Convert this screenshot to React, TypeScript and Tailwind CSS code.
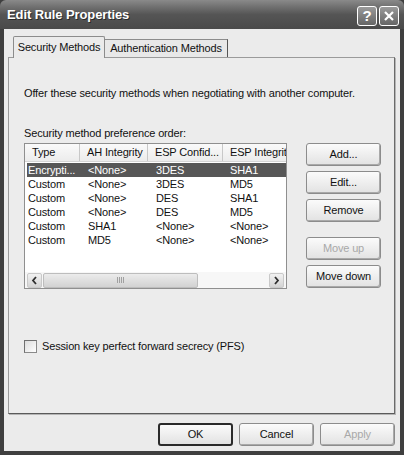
import React from "react";

const rows = [
  ["Encrypti...", "<None>", "3DES", "SHA1"],
  ["Custom", "<None>", "3DES", "MD5"],
  ["Custom", "<None>", "DES", "SHA1"],
  ["Custom", "<None>", "DES", "MD5"],
  ["Custom", "SHA1", "<None>", "<None>"],
  ["Custom", "MD5", "<None>", "<None>"],
];

function Btn({ label, disabled, isDefault, className = "" }: { label: string; disabled?: boolean; isDefault?: boolean; className?: string }) {
  return (
    <div
      className={
        "w-[75px] h-[23px] flex items-center justify-center rounded-[3px] bg-gradient-to-b from-[#fbfbfb] to-[#e2e2e2] " +
        (isDefault
          ? "border-2 border-[#2a2a2a] "
          : "border border-[#8c8c8c] shadow-[inset_-1px_-1px_0_#a9a9a9] ") +
        (disabled ? "text-[#a8a8a8] " : "text-[#111] ") +
        className
      }
    >
      {label}
    </div>
  );
}

function Arrow({ dir }: { dir: "l" | "r" }) {
  return (
    <div className="w-[15px] h-[15px] rounded-[2px] border border-[#c9c9c9] bg-gradient-to-b from-[#f2f2f2] to-[#d4d4d4] flex items-center justify-center">
      <svg width="7" height="9" viewBox="0 0 7 9">
        <polyline
          points={dir === "l" ? "5,1 2,4.5 5,8" : "2,1 5,4.5 2,8"}
          fill="none"
          stroke="#2f2f2f"
          strokeWidth="1.8"
        />
      </svg>
    </div>
  );
}

export default function App() {
  return (
    <div className="w-[404px] h-[455px] bg-[#3f3f3f] flex flex-col font-['Liberation_Sans',Arial,sans-serif] text-[#111] overflow-hidden">
      {/* title bar */}
      <div className="h-[29px] rounded-t-[6px] bg-gradient-to-b from-[#8a8a8a] via-[#555] to-[#4a4a4a] flex items-center justify-between pl-[7px] pr-[5px]">
        <span className="text-white font-bold text-[13px] tracking-[-0.1px] [text-shadow:1px_1px_0_#2a2a2a]">Edit Rule Properties</span>
        <div className="flex gap-[2px] pt-[2px]">
          <div className="w-[20px] h-[20px] rounded-[3px] border border-white bg-gradient-to-b from-[#9a9a9a] to-[#666] flex items-center justify-center text-white font-bold text-[15px] leading-none">
            ?
          </div>
          <div className="w-[20px] h-[20px] rounded-[3px] border border-white bg-gradient-to-b from-[#9a9a9a] to-[#666] flex items-center justify-center">
            <svg width="12" height="12" viewBox="0 0 12 12">
              <path d="M2 2 L10 10 M10 2 L2 10" stroke="white" strokeWidth="2.2" />
            </svg>
          </div>
        </div>
      </div>

      {/* body */}
      <div className="flex-1 mx-[4px] mb-[4px] bg-[#ebebeb] pl-[4px] pr-[5px] pt-[7px] flex flex-col text-[11px] tracking-[-0.15px]">
        {/* tabs */}
        <div className="h-[21px] flex items-end pl-[5px]">
          <div className="relative z-10 -mb-px w-[92px] h-[22px] border border-b-0 border-[#8c8c8c] bg-[#ebebeb] rounded-t-[2px] flex items-center justify-center pb-[1px]">
            Security Methods
          </div>
          <div className="w-[123px] h-[18px] border border-l-0 border-b-0 border-[#8c8c8c] border-r-[#555] bg-[#e8e8e8] flex items-center justify-center">
            Authentication Methods
          </div>
        </div>

        {/* panel */}
        <div className="h-[357px] border border-[#9a9a9a] border-r-[#6a6a6a] border-b-[#5a5a5a] shadow-[1px_1px_0_#b5b5b5] bg-[#ececec] pl-[15px] pt-[29px] flex flex-col">
          <div className="h-[13px] leading-[13px]">Offer these security methods when negotiating with another computer.</div>
          <div className="h-[13px] leading-[13px] mt-[27px]">Security method preference order:</div>

          <div className="flex mt-[3px]">
            {/* list view */}
            <div className="w-[263px] h-[146px] border border-[#8f8f8f] bg-white flex flex-col overflow-hidden">
              <div className="h-[18px] flex bg-gradient-to-b from-[#fafafa] to-[#ececec] border-b border-[#d5d5d5] shrink-0">
                {[
                  ["Type", "w-[55px]"],
                  ["AH Integrity", "w-[68px]"],
                  ["ESP Confid...", "w-[75px]"],
                  ["ESP Integrit", "w-[80px]"],
                ].map(([t, w]) => (
                  <div key={t} className={w + " shrink-0 pl-[7px] flex items-center border-r border-[#c8c8c8] whitespace-nowrap"}>
                    {t}
                  </div>
                ))}
              </div>
              <div className="flex-1 pt-[1px] pl-[2px]">
                {rows.map((r, i) => (
                  <div
                    key={i}
                    className={
                      "h-[14px] flex items-center whitespace-nowrap " +
                      (i === 0 ? "bg-[#575757] text-white" : "")
                    }
                  >
                    <div className="w-[53px] shrink-0 pl-[1px]">{r[0]}</div>
                    <div className="w-[68px] shrink-0 pl-[8px]">{r[1]}</div>
                    <div className="w-[75px] shrink-0 pl-[8px]">{r[2]}</div>
                    <div className="w-[63px] shrink-0 pl-[7px]">{r[3]}</div>
                  </div>
                ))}
              </div>
              {/* horizontal scrollbar */}
              <div className="h-[16px] shrink-0 flex items-center px-[2px] bg-[#f7f7f7]">
                <Arrow dir="l" />
                <div className="w-[155px] h-[15px] ml-[1px] rounded-[2px] border border-[#bdbdbd] bg-gradient-to-b from-[#ececec] to-[#d2d2d2] flex items-center justify-center gap-[1px]">
                  <span className="w-px h-[6px] bg-[#a0a0a0]" />
                  <span className="w-px h-[6px] bg-[#a0a0a0]" />
                  <span className="w-px h-[6px] bg-[#a0a0a0]" />
                  <span className="w-px h-[6px] bg-[#a0a0a0]" />
                </div>
                <div className="flex-1" />
                <Arrow dir="r" />
              </div>
            </div>

            {/* side buttons */}
            <div className="ml-[19px] flex flex-col">
              <Btn label="Add..." />
              <Btn label="Edit..." className="mt-[5px]" />
              <Btn label="Remove" className="mt-[5px]" />
              <Btn label="Move up" disabled className="mt-[15px]" />
              <Btn label="Move down" className="mt-[5px]" />
            </div>
          </div>

          <div className="flex items-center mt-[49px]">
            <div className="w-[13px] h-[13px] border border-[#8a8a8a] border-l-[#6f6f6f] border-t-[#6f6f6f] bg-gradient-to-br from-[#dcdcdc] to-white" />
            <span className="ml-[5px]">Session key perfect forward secrecy (PFS)</span>
          </div>
        </div>

        {/* dialog buttons */}
        <div className="flex justify-end gap-[6px] mt-[9px]">
          <Btn label="OK" isDefault />
          <Btn label="Cancel" />
          <Btn label="Apply" disabled />
        </div>
      </div>
    </div>
  );
}
